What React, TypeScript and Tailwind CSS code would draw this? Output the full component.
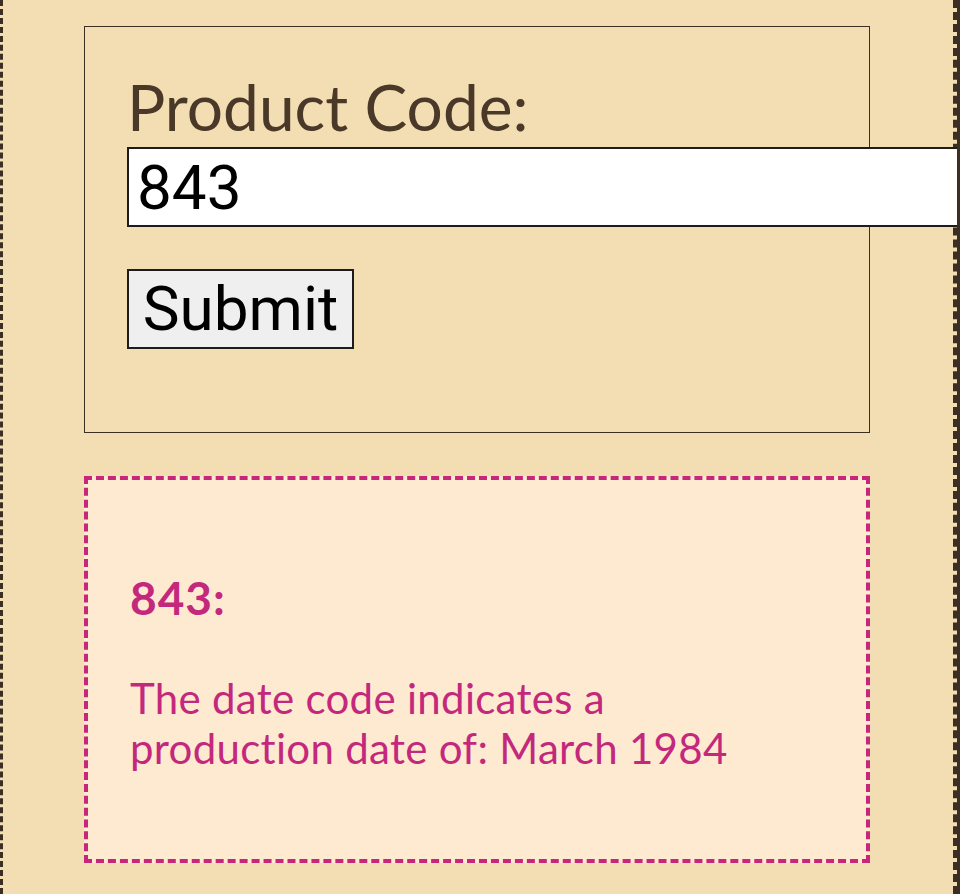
import { useState } from 'react'

export default function App() {
  const [code, setCode] = useState('843')

  return (
    <div className="flex h-[894px] w-[960px] overflow-hidden bg-[#f3ddb3]">
      <div className="w-[957px] shrink-0 border-l-[3px] border-r-[4px] border-dashed border-[#3b2e22] pl-[81px] pt-[26px]">
        {/* Form */}
        <form
          className="w-[786px] border border-[#3b2e22] pl-[42px] pt-[48px] pb-[83px]"
          onSubmit={(e) => e.preventDefault()}
        >
          <label className="block h-[64px] text-[64px] leading-none text-[#4a3828] font-['Lato',sans-serif]">
            Product Code:
          </label>
          <input
            value={code}
            onChange={(e) => setCode(e.target.value)}
            className="mt-[8px] block h-[80px] w-[900px] max-w-none border-2 border-[#1c1c1c] bg-white pl-[8px] text-[62px] text-black outline-none font-['Roboto',sans-serif]"
          />
          <button
            type="submit"
            className="mt-[42px] block h-[80px] w-[227px] border-2 border-[#1c1c1c] bg-[#efefef] text-[62px] leading-none text-black font-['Roboto',sans-serif]"
          >
            Submit
          </button>
        </form>

        {/* Result */}
        <div className="mt-[43px] h-[387px] w-[786px] border-4 border-dashed border-[#c8267a] bg-[#fdead0] pl-[42px] pt-[95px] text-[#c4287c] font-['Lato',sans-serif] [font-variant-ligatures:none]">
          <h3 className="h-[46px] text-[46px] font-bold leading-none tracking-[1px]">{code}:</h3>
          <p className="mt-[52px] text-[42px] leading-[50px] tracking-[0.3px]">
            The date code indicates a
            <br />
            production date of: March 1984
          </p>
        </div>
      </div>
      <div className="flex-1 bg-[#3b2e22]" />
    </div>
  )
}
